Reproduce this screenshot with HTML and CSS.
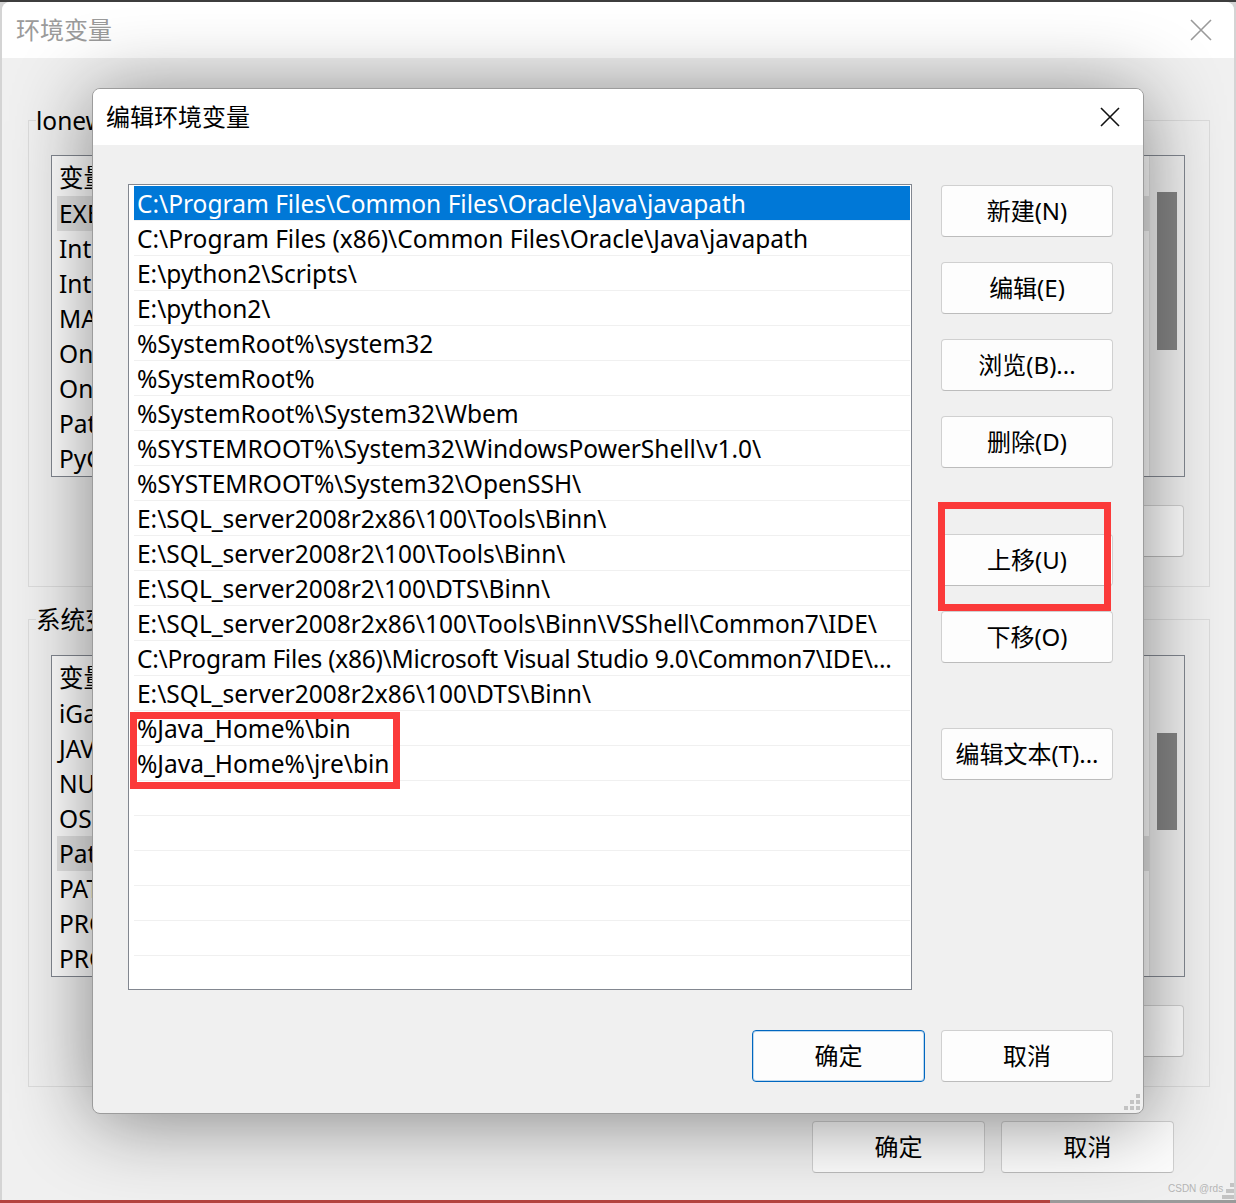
FILE: index.html
```html
<!DOCTYPE html>
<html lang="zh-CN">
<head>
<meta charset="utf-8">
<title>编辑环境变量</title>
<link rel="stylesheet" href="styles.css">
</head>
<body>
<div class="screen">
  <div class="win">
    <div class="win-title">
      <span class="win-title-text">环境变量</span>
      <svg class="win-close" width="22" height="22" viewBox="0 0 22 22"><path d="M1 1L21 21M21 1L1 21"/></svg>
    </div>
    <div class="win-body">
      <section class="group">
        <div class="group-head"><span class="group-label">lonewolf 的用户变量(U)</span></div>
        <div class="group-body">
          <div class="vlist">
            <div class="vtable">
              <div class="vrow vhead"><span class="c1">变量</span><span class="c2">值</span></div>
              <div class="vrow sel"><span class="c1">EXE4J_JAVA_HOME</span><span class="c2">C:\Program Files\Java\jdk1.8.0</span></div>
              <div class="vrow"><span class="c1">IntelliJ IDEA</span><span class="c2">E:\IntelliJ IDEA\bin;</span></div>
              <div class="vrow"><span class="c1">IntelliJ IDEA Community Edition</span><span class="c2">E:\IDEA\bin;</span></div>
              <div class="vrow"><span class="c1">MAVEN_HOME</span><span class="c2">E:\apache-maven</span></div>
              <div class="vrow"><span class="c1">OneDrive</span><span class="c2">C:\Users\lonewolf\OneDrive</span></div>
              <div class="vrow"><span class="c1">OneDriveConsumer</span><span class="c2">C:\Users\lonewolf\OneDrive</span></div>
              <div class="vrow"><span class="c1">Path</span><span class="c2">C:\Users\lonewolf\AppData\Local\Microsoft\WindowsApps;</span></div>
              <div class="vrow"><span class="c1">PyCharm Community Edition</span><span class="c2">E:\PyCharm\bin;</span></div>
            </div>
            <div class="vscroll"><div class="thumb thumb-u"></div></div>
          </div>
          <div class="btn-row">
            <button class="btn">新建(N)...</button>
            <button class="btn">编辑(E)...</button>
            <button class="btn">删除(D)</button>
          </div>
        </div>
      </section>

      <section class="group group-sys">
        <div class="group-head"><span class="group-label">系统变量(S)</span></div>
        <div class="group-body">
          <div class="vlist">
            <div class="vtable">
              <div class="vrow vhead"><span class="c1">变量</span><span class="c2">值</span></div>
              <div class="vrow"><span class="c1">iGameCenter</span><span class="c2">E:\iGame</span></div>
              <div class="vrow"><span class="c1">JAVA_HOME</span><span class="c2">C:\Program Files\Java\jdk1.8.0</span></div>
              <div class="vrow"><span class="c1">NUMBER_OF_PROCESSORS</span><span class="c2">16</span></div>
              <div class="vrow"><span class="c1">OS</span><span class="c2">Windows_NT</span></div>
              <div class="vrow sel"><span class="c1">Path</span><span class="c2">C:\Program Files\Common Files\Oracle\Java\javapath;</span></div>
              <div class="vrow"><span class="c1">PATHEXT</span><span class="c2">.COM;.EXE;.BAT;.CMD;.VBS;.VBE;.JS</span></div>
              <div class="vrow"><span class="c1">PROCESSOR_ARCHITECTURE</span><span class="c2">AMD64</span></div>
              <div class="vrow"><span class="c1">PROCESSOR_IDENTIFIER</span><span class="c2">AMD64 Family 25</span></div>
            </div>
            <div class="vscroll"><div class="thumb thumb-s"></div></div>
          </div>
          <div class="btn-row">
            <button class="btn">新建(W)...</button>
            <button class="btn">编辑(I)...</button>
            <button class="btn">删除(L)</button>
          </div>
        </div>
      </section>

      <div class="win-foot">
        <button class="btn">确定</button>
        <button class="btn">取消</button>
      </div>
    </div>
  </div>
  <div class="strip"></div>

  <div class="wm">CSDN @rds</div>
  <svg class="grip grip-outer" width="12" height="16" viewBox="0 0 12 16"><rect x="8" y="0" width="4" height="4"/><rect x="4" y="6" width="4" height="4"/><rect x="8" y="6" width="4" height="4"/><rect x="0" y="12" width="4" height="4"/><rect x="4" y="12" width="4" height="4"/><rect x="8" y="12" width="4" height="4"/></svg>

  <div class="dlg">
    <div class="dlg-title">
      <span class="dlg-title-text">编辑环境变量</span>
      <svg class="dlg-close" width="20" height="20" viewBox="0 0 20 20"><path d="M1 1L19 19M19 1L1 19"/></svg>
    </div>
    <div class="dlg-body">
      <div class="plist">
        <div class="prow sel">C:\Program Files\Common Files\Oracle\Java\javapath</div>
        <div class="prow">C:\Program Files (x86)\Common Files\Oracle\Java\javapath</div>
        <div class="prow">E:\python2\Scripts\</div>
        <div class="prow">E:\python2\</div>
        <div class="prow">%SystemRoot%\system32</div>
        <div class="prow">%SystemRoot%</div>
        <div class="prow">%SystemRoot%\System32\Wbem</div>
        <div class="prow">%SYSTEMROOT%\System32\WindowsPowerShell\v1.0\</div>
        <div class="prow">%SYSTEMROOT%\System32\OpenSSH\</div>
        <div class="prow">E:\SQL_server2008r2x86\100\Tools\Binn\</div>
        <div class="prow">E:\SQL_server2008r2\100\Tools\Binn\</div>
        <div class="prow">E:\SQL_server2008r2\100\DTS\Binn\</div>
        <div class="prow">E:\SQL_server2008r2x86\100\Tools\Binn\VSShell\Common7\IDE\</div>
        <div class="prow tight">C:\Program Files (x86)\Microsoft Visual Studio 9.0\Common7\IDE\...</div>
        <div class="prow">E:\SQL_server2008r2x86\100\DTS\Binn\</div>
        <div class="prow">%Java_Home%\bin</div>
        <div class="prow">%Java_Home%\jre\bin</div>
        <div class="prow"></div>
        <div class="prow"></div>
        <div class="prow"></div>
        <div class="prow"></div>
        <div class="prow"></div>
        <div class="prow"></div>
      </div>
      <div class="pbtns">
        <button class="btn">新建(N)</button>
        <button class="btn">编辑(E)</button>
        <button class="btn">浏览(B)...</button>
        <button class="btn">删除(D)</button>
        <button class="btn mt-up">上移(U)</button>
        <button class="btn">下移(O)</button>
        <button class="btn mt-text">编辑文本(T)...</button>
      </div>
      <div class="pfoot">
        <button class="btn primary">确定</button>
        <button class="btn">取消</button>
      </div>
    </div>
    <svg class="grip grip-dlg" width="16" height="16" viewBox="0 0 16 16"><rect x="12" y="0" width="4" height="4"/><rect x="6" y="6" width="4" height="4"/><rect x="12" y="6" width="4" height="4"/><rect x="0" y="12" width="4" height="4"/><rect x="6" y="12" width="4" height="4"/><rect x="12" y="12" width="4" height="4"/></svg>
  </div>

  <div class="mark mark-paths"></div>
  <div class="mark mark-up"></div>
</div>
</body>
</html>
```

FILE: styles.css
```css
* { box-sizing: border-box; }

html, body {
  margin: 0;
  padding: 0;
}

body {
  width: 1236px;
  height: 1203px;
  overflow: hidden;
  background: #d9d9d9;
  font-family: "Noto Sans", "Noto Sans CJK SC", sans-serif;
  font-size: 24.5px;
  color: #000;
}

.screen {
  position: relative;
  width: 1236px;
  height: 1203px;
  padding: 2px 2px 0;
  background: linear-gradient(#3d3d3d 0, #3d3d3d 2px, #d4d4d4 2px);
}

/* ---------- outer window ---------- */
.win {
  height: 1198px;
  border-radius: 8px 8px 0 0;
  overflow: hidden;
  display: flex;
  flex-direction: column;
  background: #f0f0f0;
}

.win-title {
  height: 56px;
  flex: none;
  background: #fff;
  display: flex;
  align-items: center;
  justify-content: space-between;
  padding: 0 22px 0 14px;
}

.win-title-text {
  font-size: 24px;
  line-height: 1;
  color: #9b9b9b;
}

.win-close path {
  stroke: #9a9a9a;
  stroke-width: 1.6;
  fill: none;
}

.win-body {
  flex: 1;
  padding: 49px 24px 0 26px;
}

.group-head {
  display: flex;
  height: 28px;
}

.group-head::before {
  content: "";
  width: 7px;
  height: 14px;
  align-self: flex-end;
  border-top: 1px solid #dcdcdc;
  border-left: 1px solid #dcdcdc;
}

.group-head::after {
  content: "";
  flex: 1;
  height: 14px;
  align-self: flex-end;
  border-top: 1px solid #dcdcdc;
  border-right: 1px solid #dcdcdc;
}

.group-label {
  line-height: 28px;
  padding: 0 1px 0 0;
  white-space: nowrap;
}

.group-body {
  border: 1px solid #dcdcdc;
  border-top: 0;
  padding: 20px 24px 29px 22px;
}

.group-sys {
  margin-top: 19px;
}

.group-sys .group-body {
  padding-top: 21px;
}

.vlist {
  height: 322px;
  border: 1px solid #828790;
  background: #fff;
  display: flex;
}

.vtable {
  flex: 1;
  min-width: 0;
  overflow: hidden;
}

.vrow {
  display: flex;
  align-items: center;
  height: 35px;
  margin-left: 5px;
  padding-left: 2px;
  white-space: nowrap;
}

.vrow.vhead {
  height: 40px;
}

.vrow.sel {
  background: #e5e5e5;
}

.c1 {
  width: 420px;
  flex: none;
}

.c2 {
  max-width: 540px;
  overflow: hidden;
  text-overflow: ellipsis;
}

.vscroll {
  width: 35px;
  flex: none;
  background: #f0f0f0;
  border-left: 1px solid #e6e6e6;
  padding-left: 7px;
}

.thumb {
  width: 20px;
  background: #858585;
}

.thumb-u {
  margin-top: 36px;
  height: 158px;
}

.thumb-s {
  margin-top: 77px;
  height: 97px;
}

.btn-row {
  display: flex;
  justify-content: flex-end;
  gap: 16px;
  margin-top: 28px;
  padding-right: 1px;
}

.btn {
  width: 173px;
  height: 52px;
  flex: none;
  padding: 0 0 3px;
  border: 1px solid #d0d0d0;
  border-bottom-color: #bcbcbc;
  border-radius: 4px;
  background: #fdfdfd;
  font-family: inherit;
  font-size: 24px;
  color: #000;
  display: flex;
  align-items: center;
  justify-content: center;
  white-space: nowrap;
}

.win-foot {
  display: flex;
  justify-content: flex-end;
  gap: 16px;
  margin-top: 34px;
  padding-right: 36px;
}

.strip {
  height: 3px;
  background: linear-gradient(90deg, #b4433f 0, #b4433f 1050px, #9a9a9a 1050px);
  margin: 0 -2px;
}

.wm {
  position: absolute;
  left: 1168px;
  top: 1183px;
  font-family: "Liberation Sans", sans-serif;
  font-size: 10px;
  color: #b5b5b5;
  white-space: nowrap;
}

.grip rect {
  fill: #c3c3c3;
}

.grip-outer {
  position: absolute;
  left: 1222px;
  top: 1183px;
}

/* ---------- edit dialog ---------- */
.dlg {
  position: absolute;
  left: 92px;
  top: 88px;
  width: 1052px;
  height: 1026px;
  border: 1px solid #9c9c9c;
  border-radius: 8px;
  background: #f0f0f0;
  box-shadow: 0 6px 80px rgba(0, 0, 0, 0.46);
  display: flex;
  flex-direction: column;
  overflow: hidden;
}

.dlg-title {
  height: 56px;
  flex: none;
  background: #fff;
  display: flex;
  align-items: center;
  justify-content: space-between;
  padding: 0 23px 0 13px;
}

.dlg-title-text {
  font-size: 24px;
  line-height: 1;
}

.dlg-close path {
  stroke: #111;
  stroke-width: 1.6;
  fill: none;
}

.dlg-body {
  flex: 1;
  display: grid;
  grid-template-columns: 784px 172px;
  grid-template-rows: 806px 52px;
  column-gap: 29px;
  row-gap: 40px;
  padding: 39px 30px 31px 35px;
}

.plist {
  border: 1px solid #828790;
  background: #fff;
  padding: 1px 1px 0 5px;
  overflow: hidden;
}

.prow {
  height: 35px;
  border-bottom: 1px solid #f0f0f0;
  padding: 1px 2px 0 3px;
  line-height: 34px;
  white-space: nowrap;
  overflow: hidden;
}

.prow.tight {
  letter-spacing: -0.25px;
}

.prow.sel {
  background: #0078d7;
  color: #fff;
}

.pbtns {
  display: flex;
  flex-direction: column;
  gap: 25px;
  padding-top: 1px;
}

.pbtns .btn {
  width: 172px;
}

.pbtns .mt-up {
  margin-top: 41px;
}

.pbtns .mt-text {
  margin-top: 40px;
}

.pfoot {
  grid-column: 1 / -1;
  display: flex;
  justify-content: flex-end;
  gap: 16px;
}

.pfoot .btn:last-child {
  width: 172px;
}

.btn.primary {
  border-color: #0067c0;
  box-shadow: inset 0 0 0 1px rgba(0, 103, 192, 0.25);
}

.grip-dlg {
  position: absolute;
  right: 3px;
  bottom: 3px;
}

/* ---------- red annotations ---------- */
.mark {
  position: absolute;
  border: 7px solid #fb3a3a;
}

.mark-paths {
  left: 130px;
  top: 712px;
  width: 270px;
  height: 77px;
}

.mark-up {
  left: 938px;
  top: 502px;
  width: 173px;
  height: 109px;
}
```
